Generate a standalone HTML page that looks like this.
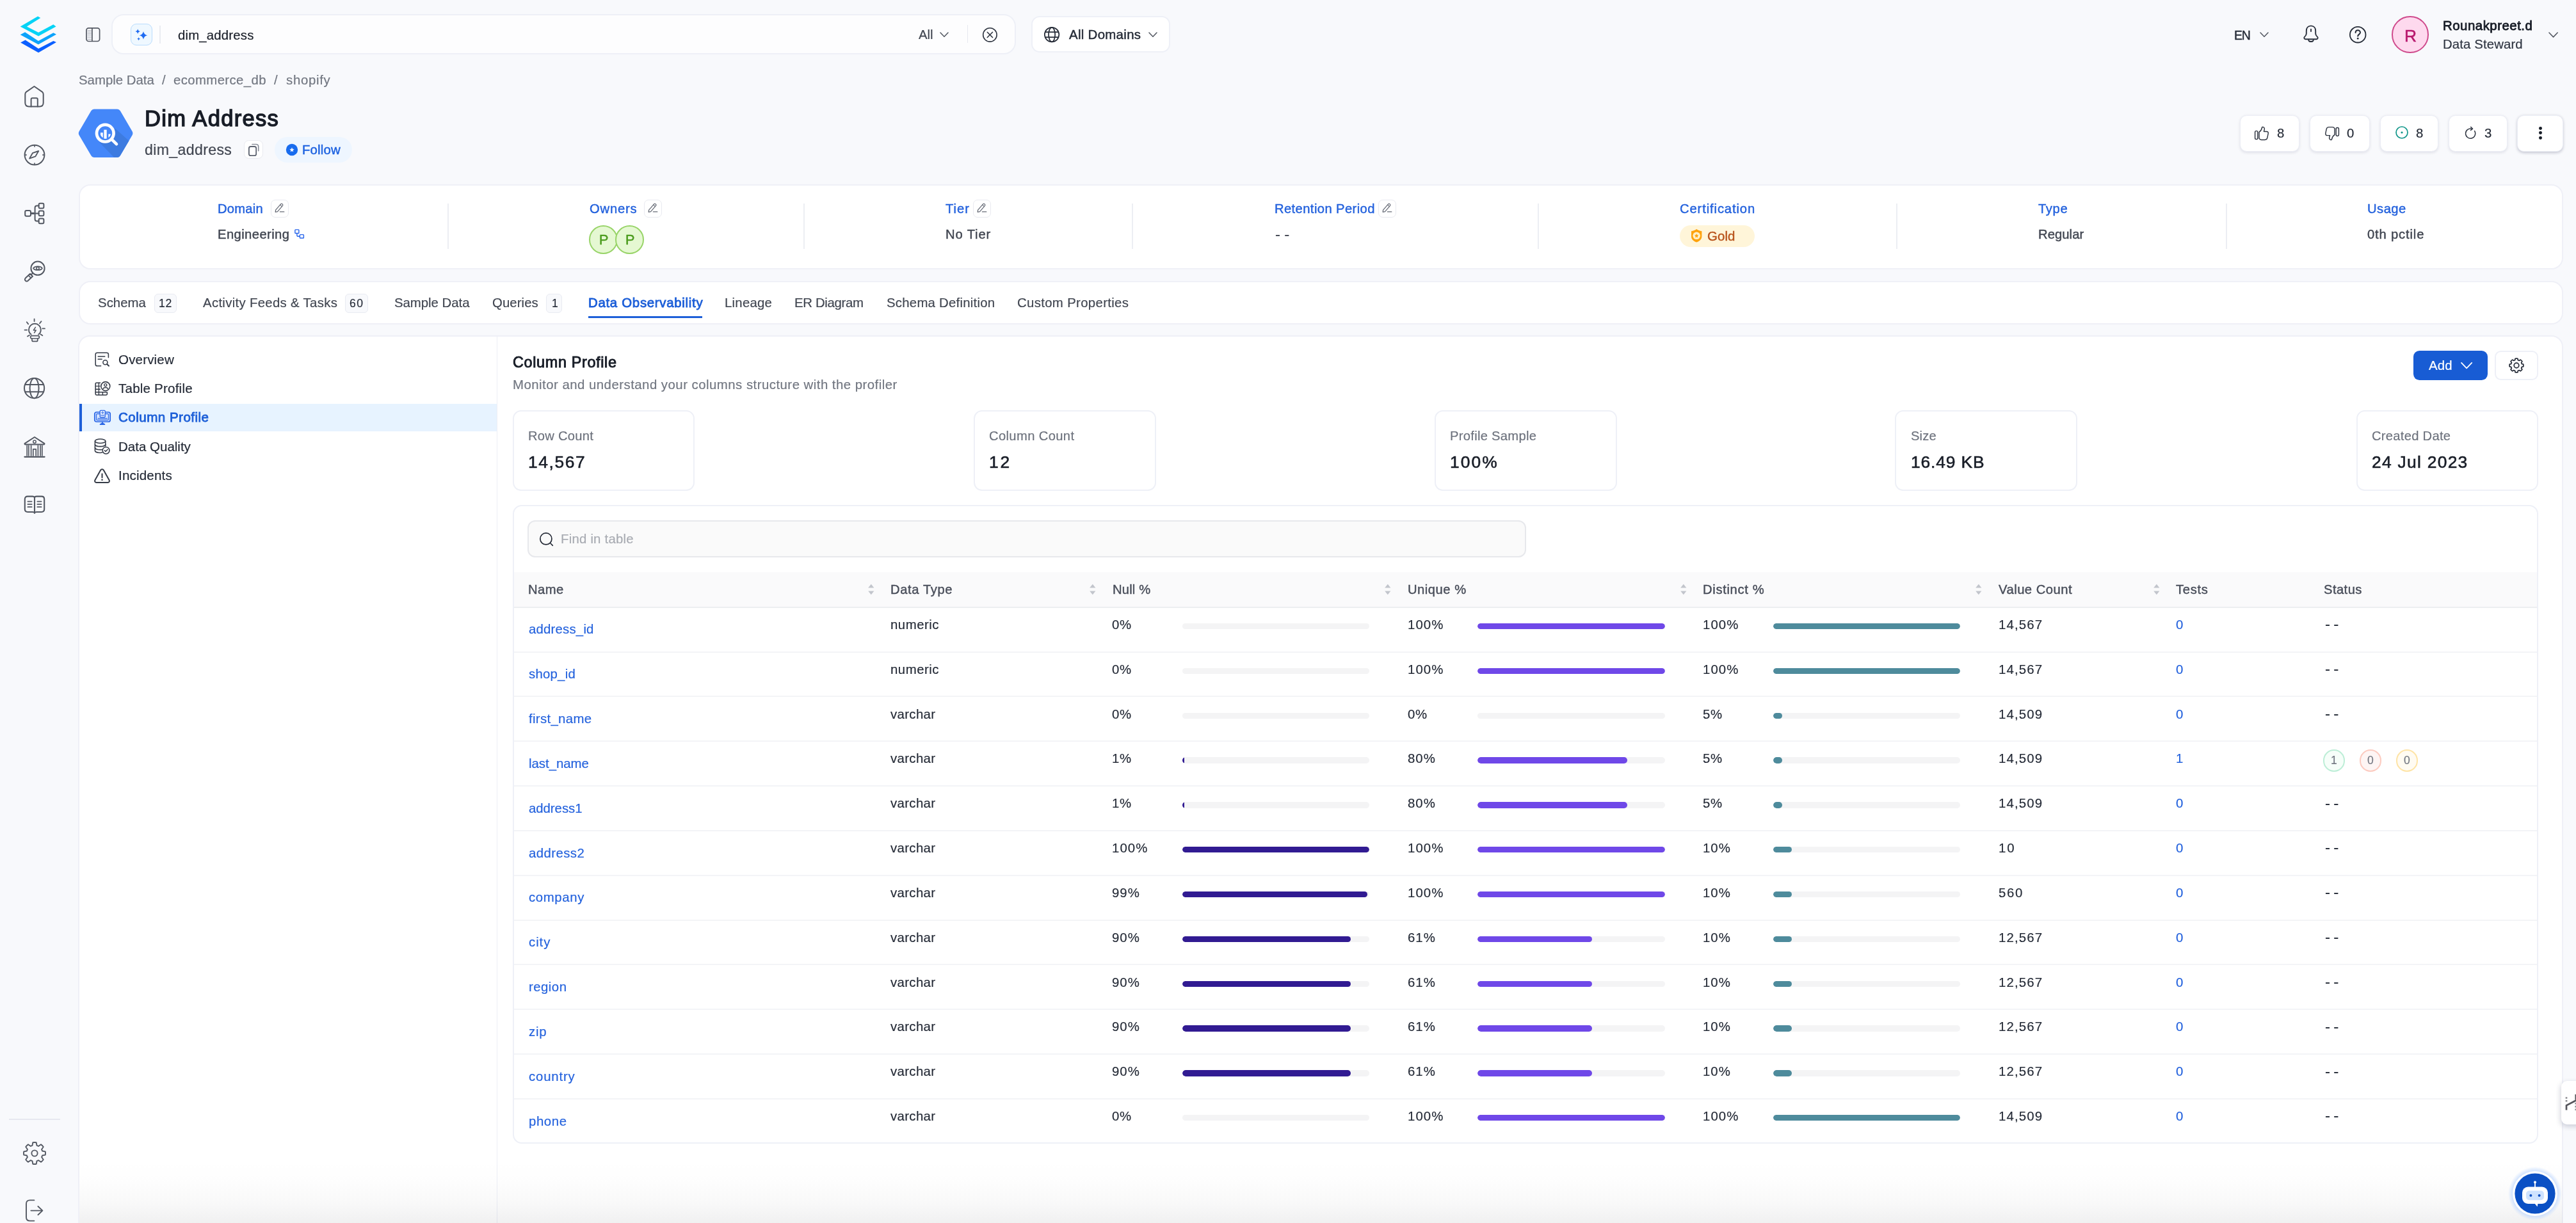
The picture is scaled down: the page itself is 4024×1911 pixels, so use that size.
<!DOCTYPE html>
<html lang="en"><head><meta charset="utf-8"><title>dim_address - Column Profile</title>
<style>
html,body{margin:0;padding:0;width:4024px;height:1911px;overflow:hidden}
body{width:4024px;height:1911px;overflow:hidden;background:#f8f9fc;position:relative;font-family:"Liberation Sans",sans-serif;}
div,span.t,svg.i{position:absolute;box-sizing:border-box}
.t{white-space:nowrap;will-change:transform}
.card{background:#fff;border:2px solid #eff0f7}
</style></head><body>
<div id="root" style="left:0;top:0;width:4024px;height:1911px;overflow:hidden">
<svg class="i" style="left:31px;top:25px;" width="58" height="59" viewBox="0 0 58 59"><polygon points="0.65,16.55 28.1,0.44 32.3,3.04 10.9,16.55 29.06,25.87 52.36,13.29 56.55,16.55 29.06,31.46" fill="#06d3f6"/><polygon points="0.65,29.3 8.1,25.2 28.9,38.9 52.4,26.15 57,28.7 28.9,44.5" fill="#0ca3fb"/><polygon points="1.1,41.4 8.6,37.5 29.06,51 52.4,38.9 57,41.06 29.06,57.3" fill="#0b5fff"/></svg>
<svg class="i" style="left:36.4px;top:132px;" width="35" height="38" viewBox="0 0 35 38"><g fill="none" stroke="#535862" stroke-width="2" stroke-linecap="round" stroke-linejoin="round"><path d="M17.5 3L5 11.6C3.8 12.5 3.3 13.6 3.3 15.2V28.6C3.3 32 5.4 34.4 9 34.4H26C29.6 34.4 31.7 32 31.7 28.6V15.2C31.7 13.6 31.2 12.5 30 11.6Z"/><path d="M12.6 34.4V23.2C12.6 22 13.4 21.2 14.6 21.2H20.8C22 21.2 22.8 22 22.8 23.2V34.4"/></g></svg>
<svg class="i" style="left:36px;top:224px;" width="36" height="36" viewBox="0 0 36 36"><g fill="none" stroke="#535862" stroke-width="2" stroke-linecap="round" stroke-linejoin="round"><circle cx="18" cy="18.1" r="15.4"/><path d="M10.1 23.6L14.9 15.2L24.2 12L19.4 20.4Z" stroke-width="1.9"/><path d="M18 3.4V5.2M18 31V32.8M3.4 18.1H5.2M30.8 18.1H32.6" stroke-width="1.6"/></g></svg>
<svg class="i" style="left:36px;top:315px;" width="36" height="37" viewBox="0 0 36 37"><g fill="none" stroke="#535862" stroke-width="2" stroke-linecap="round" stroke-linejoin="round"><rect x="3.2" y="14" width="8.8" height="8.8" rx="2.2"/><rect x="24.6" y="2.8" width="7.8" height="7.6" rx="2"/><rect x="24.6" y="14.6" width="7.8" height="7.6" rx="2"/><rect x="24.6" y="26.6" width="7.8" height="7.6" rx="2"/><path d="M12 18.4H24.6M24.6 6.6H21.6C19.6 6.6 18.6 7.6 18.6 9.6V27.4C18.6 29.4 19.6 30.4 21.6 30.4H24.6"/><path d="M12 16.9H17.5V19.9H12Z" fill="#535862" stroke="none"/></g></svg>
<svg class="i" style="left:36px;top:405px;" width="37" height="38" viewBox="0 0 37 38"><g fill="none" stroke="#535862" stroke-width="2" stroke-linecap="round" stroke-linejoin="round"><circle cx="23" cy="14.2" r="10.6"/><path d="M16 14.2C18.4 10.4 27.6 10.4 30 14.2C27.6 18 18.4 18 16 14.2Z" stroke-width="1.6"/><circle cx="23" cy="14.2" r="2.1" stroke-width="1.6"/><path d="M15.2 21.6L12.6 24.2"/><path d="M11 22.8L15 26.8L7.8 33.6C6.6 34.8 4.8 34.8 3.8 33.6C2.6 32.6 2.6 30.8 3.8 29.6Z"/><path d="M8.4 25.4L12.4 29.4" stroke-width="1.6"/></g></svg>
<svg class="i" style="left:36px;top:496px;" width="37" height="42" viewBox="0 0 37 42"><g fill="none" stroke="#535862" stroke-width="2" stroke-linecap="round" stroke-linejoin="round"><path d="M12.6 26.6C10.4 24.9 9 22.2 9 19.2C9 14 13.2 9.8 18.4 9.8C23.6 9.8 27.8 14 27.8 19.2C27.8 22.2 26.4 24.9 24.2 26.6" stroke-width="1.9"/><rect x="11.6" y="28.6" width="13.8" height="4.4" rx="2.2" stroke-width="1.7"/><path d="M14 33.2V35.4C14 36.6 14.8 37.4 16 37.4H20.8C22 37.4 22.8 36.6 22.8 35.4V33.2" stroke-width="1.7"/><path d="M19.4 15.4L16.4 20H20.2L17.6 24" stroke-width="1.5"/><path d="M17.6 2.4V6M5.8 7.3L8.2 10.4M28.5 6.1L26 9.2M2.5 19.6H6.2M30.3 17.4H34M7 29.6L10 27.7M27.3 26.3L30.3 28.2" stroke-width="1.8"/></g></svg>
<svg class="i" style="left:35.46px;top:588.4px;" width="37.2" height="37.2" viewBox="0 0 37.2 37.2"><g fill="none" stroke="#535862" stroke-width="2.0"><circle cx="18.6" cy="18.6" r="15.6"/><ellipse cx="18.6" cy="18.6" rx="7.02" ry="15.6"/><path d="M4.09 12.98H33.11M4.09 24.22H33.11"/></g></svg>
<svg class="i" style="left:35px;top:680px;" width="38" height="38" viewBox="0 0 38 38"><g fill="none" stroke="#535862" stroke-width="2" stroke-linecap="round" stroke-linejoin="round"><path d="M19 3L3.8 12.8C3.2 13.2 3.5 14.4 4.2 14.4H33.8C34.5 14.4 34.8 13.2 34.2 12.8Z"/><circle cx="19" cy="10.2" r="2.2" stroke-width="1.5"/><path d="M7.2 16V32M13.6 16V32M24.4 16V32M30.8 16V32M9.8 16V32M28.2 16V32" stroke-width="1.7"/><path d="M16.8 32V21.8H21.2V32" stroke-width="1.7"/><path d="M3.4 33.8H34.6" stroke-width="2.2"/></g></svg>
<svg class="i" style="left:35px;top:772px;" width="38" height="32" viewBox="0 0 38 32"><g fill="none" stroke="#535862" stroke-width="2" stroke-linecap="round" stroke-linejoin="round"><path d="M19 6C19 4.4 17.4 3.6 15.6 3.6H8.2C5.4 3.6 3.8 5.2 3.8 8V23.6C3.8 26.4 5.4 28 8.2 28H15.6C17.4 28 19 28.6 19 29.8C19 28.6 20.6 28 22.4 28H29.8C32.6 28 34.2 26.4 34.2 23.6V8C34.2 5.2 32.6 3.6 29.8 3.6H22.4C20.6 3.6 19 4.4 19 6Z" stroke-width="2.1"/><path d="M19 6V29.6" stroke-width="2.1"/><path d="M8.4 11.6H14.6M8.4 15.9H14.6M8.4 20.2H14.6M23.4 11.6H29.6M23.4 15.9H29.6M23.4 20.2H29.6" stroke-width="1.8"/></g></svg>
<div style="left:14px;top:1748px;width:80px;height:2px;background:#e6e8f0"></div>
<svg class="i" style="left:34px;top:1781.7px;" width="40" height="40" viewBox="0 0 40 40"><g fill="none" stroke="#535862" stroke-width="1.9" stroke-linecap="round" stroke-linejoin="round"><path d="M17.34 3.21A17.0 17.0 0 0 1 22.66 3.21L23.52 7.9A12.6 12.6 0 0 1 26.07 8.96L29.99 6.25A17.0 17.0 0 0 1 33.75 10.01L31.04 13.93A12.6 12.6 0 0 1 32.1 16.48L36.79 17.34A17.0 17.0 0 0 1 36.79 22.66L32.1 23.52A12.6 12.6 0 0 1 31.04 26.07L33.75 29.99A17.0 17.0 0 0 1 29.99 33.75L26.07 31.04A12.6 12.6 0 0 1 23.52 32.1L22.66 36.79A17.0 17.0 0 0 1 17.34 36.79L16.48 32.1A12.6 12.6 0 0 1 13.93 31.04L10.01 33.75A17.0 17.0 0 0 1 6.25 29.99L8.96 26.07A12.6 12.6 0 0 1 7.9 23.52L3.21 22.66A17.0 17.0 0 0 1 3.21 17.34L7.9 16.48A12.6 12.6 0 0 1 8.96 13.93L6.25 10.01A17.0 17.0 0 0 1 10.01 6.25L13.93 8.96A12.6 12.6 0 0 1 16.48 7.9L17.34 3.21Z" stroke-linejoin="round"/><circle cx="20" cy="20" r="4.6"/></g></svg>
<svg class="i" style="left:36px;top:1870px;" width="36" height="41" viewBox="0 0 36 41"><g fill="none" stroke="#535862" stroke-width="2" stroke-linecap="round" stroke-linejoin="round"><path d="M17.4 5.4H10.6C7 5.4 5 7.6 5 11V32C5 35.4 7 37.6 10.6 37.6H17.4" stroke-width="1.9"/><path d="M12.4 21.6H30M23.4 15L30.4 21.6L23.4 28.2" stroke-width="1.9"/></g></svg>
<svg class="i" style="left:132px;top:41px;" width="27" height="27" viewBox="0 0 27 27"><g fill="none" stroke="#535862" stroke-width="1.7"><rect x="3" y="2.9" width="20.6" height="20.6" rx="3.4"/><path d="M11.9 2.9V23.5"/></g><g stroke="#a3a8b2" stroke-width="1.1"><path d="M4.6 7.4H10.8M4.6 10.6H10.8M4.6 13.8H10.8M4.6 17H10.8M4.6 20.2H10.8"/></g></svg>
<div style="left:173.8px;top:22.2px;width:1413.4px;height:63px;background:#fdfdfe;border:2px solid #eef0f7;border-radius:19px"></div>
<div style="left:204px;top:37.4px;width:33.6px;height:33.6px;background:#eff8ff;border:1.5px solid #b9dcfd;border-radius:9px"></div>
<svg class="i" style="left:204px;top:37.4px;" width="33.6" height="33.6" viewBox="0 0 33.6 33.6"><path fill="#1e6bf2" d="M20 12Q21.04 17.16 26.2 18.2Q21.04 19.24 20 24.4Q18.96 19.24 13.8 18.2Q18.96 17.16 20 12ZM11.2 8.4Q11.82 11.48 14.9 12.1Q11.82 12.72 11.2 15.8Q10.58 12.72 7.5 12.1Q10.58 11.48 11.2 8.4ZM12.6 21.2Q13.02 23.28 15.1 23.7Q13.02 24.12 12.6 26.2Q12.18 24.12 10.1 23.7Q12.18 23.28 12.6 21.2Z"/></svg>
<div style="left:249px;top:40px;width:1.6px;height:27.5px;background:#eaecf2"></div>
<span class="t" style="left:278px;top:43px;line-height:24px;font-size:20.4px;color:#181d27;-webkit-text-stroke:0.18px #181d27;letter-spacing:0.16px;">dim_address</span>
<span class="t" style="left:1435px;top:42px;line-height:24px;font-size:20.4px;color:#414651;-webkit-text-stroke:0.18px #414651;letter-spacing:-0.03px;">All</span>
<svg class="i" style="left:1467.4px;top:49.48px;" width="16" height="10.24" viewBox="0 0 16 10.24"><path d="M2 2L8 8.24L14 2" fill="none" stroke="#535862" stroke-width="1.55" stroke-linecap="round" stroke-linejoin="round"/></svg>
<div style="left:1510.8px;top:39.2px;width:1.6px;height:27.5px;background:#e6e8ef"></div>
<svg class="i" style="left:1532.6px;top:40.9px;" width="26.8" height="26.8" viewBox="0 0 26.8 26.8"><g fill="none" stroke="#2f3541" stroke-width="1.6" stroke-linecap="round"><circle cx="13.4" cy="13.4" r="10.7"/><path d="M9.3 9.3L17.5 17.5M17.5 9.3L9.3 17.5"/></g></svg>
<div style="left:1610.6px;top:25.2px;width:217.6px;height:57.2px;background:#fff;border:2px solid #eef0f7;border-radius:13px"></div>
<svg class="i" style="left:1628.9px;top:40.2px;" width="28.2" height="28.2" viewBox="0 0 28.2 28.2"><g fill="none" stroke="#252b37" stroke-width="1.7"><circle cx="14.1" cy="14.1" r="11.25"/><ellipse cx="14.1" cy="14.1" rx="5.06" ry="11.25"/><path d="M3.64 10.05H24.56M3.64 18.15H24.56"/></g></svg>
<span class="t" style="left:1669.5px;top:42px;line-height:24px;font-size:20.4px;color:#252b37;-webkit-text-stroke:0.45px #252b37;letter-spacing:0.32px;">All Domains</span>
<svg class="i" style="left:1793.4px;top:49.48px;" width="16" height="10.24" viewBox="0 0 16 10.24"><path d="M2 2L8 8.24L14 2" fill="none" stroke="#535862" stroke-width="1.55" stroke-linecap="round" stroke-linejoin="round"/></svg>
<span class="t" style="left:3490px;top:43px;line-height:24px;font-size:19.4px;color:#252b37;-webkit-text-stroke:0.43px #252b37;letter-spacing:-1.15px;">EN</span>
<svg class="i" style="left:3529.4px;top:49.48px;" width="16" height="10.24" viewBox="0 0 16 10.24"><path d="M2 2L8 8.24L14 2" fill="none" stroke="#535862" stroke-width="1.55" stroke-linecap="round" stroke-linejoin="round"/></svg>
<svg class="i" style="left:3595.8px;top:38.4px;" width="28" height="30" viewBox="0 0 28 30"><g fill="none" stroke="#2a303c" stroke-width="1.9" stroke-linecap="round" stroke-linejoin="round"><path d="M14 2.4C9.4 2.4 6.8 5.8 6.8 10.2V14.6C6.8 16.6 5.8 18 4.2 19.4C2.6 20.8 3.2 23.2 5.4 23.2H22.6C24.8 23.2 25.4 20.8 23.8 19.4C22.2 18 21.2 16.6 21.2 14.6V10.2C21.2 5.8 18.6 2.4 14 2.4Z"/><path d="M14 7.6V11"/><path d="M10.2 24.8C11.4 27.8 16.6 27.8 17.8 24.8"/></g></svg>
<svg class="i" style="left:3668.2px;top:38.6px;" width="30.4" height="30.4" viewBox="0 0 30.4 30.4"><circle cx="15.2" cy="15.2" r="12.3" fill="none" stroke="#252b37" stroke-width="1.8"/><path d="M11.6 12C11.6 7.2 19 7.2 19 11.8C19 14.6 15.2 14.6 15.2 17.6" fill="none" stroke="#252b37" stroke-width="2" stroke-linecap="round"/><circle cx="15.2" cy="21.2" r="1.4" fill="#252b37"/></svg>
<div style="left:3736px;top:25.2px;width:57.6px;height:57.6px;background:#fed9ee;border:2px solid #cf4a8c;border-radius:50%"></div>
<span class="t" style="left:3756.2px;top:40px;line-height:32px;font-size:26.4px;color:#b8186d;-webkit-text-stroke:0.58px #b8186d;">R</span>
<span class="t" style="left:3816px;top:28px;line-height:24px;font-size:20.4px;color:#181d27;-webkit-text-stroke:0.82px #181d27;letter-spacing:0.51px;">Rounakpreet.d</span>
<span class="t" style="left:3816px;top:57px;line-height:24px;font-size:20.4px;color:#2f3541;-webkit-text-stroke:0.18px #2f3541;letter-spacing:0.1px;">Data Steward</span>
<svg class="i" style="left:3979.8px;top:49.17px;" width="17.2" height="10.86" viewBox="0 0 17.2 10.86"><path d="M2 2L8.6 8.86L15.2 2" fill="none" stroke="#535862" stroke-width="1.55" stroke-linecap="round" stroke-linejoin="round"/></svg>
<span class="t" style="left:122.7px;top:113px;line-height:24px;font-size:20.4px;color:#717680;-webkit-text-stroke:0.18px #717680;">Sample Data</span>
<span class="t" style="left:253px;top:113px;line-height:24px;font-size:20.4px;color:#717680;-webkit-text-stroke:0.18px #717680;">/</span>
<span class="t" style="left:271.4px;top:113px;line-height:24px;font-size:20.4px;color:#717680;-webkit-text-stroke:0.18px #717680;letter-spacing:0.36px;">ecommerce_db</span>
<span class="t" style="left:428px;top:113px;line-height:24px;font-size:20.4px;color:#717680;-webkit-text-stroke:0.18px #717680;">/</span>
<span class="t" style="left:446.8px;top:113px;line-height:24px;font-size:20.4px;color:#717680;-webkit-text-stroke:0.18px #717680;letter-spacing:0.68px;">shopify</span>
<svg class="i" style="left:122px;top:169.6px;" width="86.2" height="76.2" viewBox="0 0 86.2 76.2"><defs><clipPath id="hx"><path d="M25.4 0.4H60.8C63 0.4 64.8 1.4 65.9 3.3L84.6 35.2C85.7 37.1 85.7 39.3 84.6 41.2L65.9 73.1C64.8 75 63 76 60.8 76H25.4C23.2 76 21.4 75 20.3 73.1L1.6 41.2C0.5 39.3 0.5 37.1 1.6 35.2L20.3 3.3C21.4 1.4 23.2 0.4 25.4 0.4Z"/></clipPath></defs><g clip-path="url(#hx)"><rect width="87" height="77" fill="#4487f9"/><path d="M57.5 30.5L80 50.5L68 80H60L33.5 52.5Z" fill="#3d7be0"/></g><circle cx="42.3" cy="38.2" r="13.3" fill="#4487f9" stroke="#fff" stroke-width="4.7"/><path d="M53.6 48.8L60 55.2" stroke="#fff" stroke-width="4.7" stroke-linecap="round"/><path d="M35 37.2H38.8V45.2C37 44.2 35.8 42.6 35 40.6ZM40.4 32.7H44.7V46.4C43.3 46.8 41.8 46.8 40.4 46.4ZM47.4 39.6H50.9C50.4 42.2 49.2 43.8 47.4 45Z" fill="#fff"/></svg>
<span class="t" style="left:226px;top:165px;line-height:40px;font-size:34.6px;color:#181d27;-webkit-text-stroke:1.38px #181d27;letter-spacing:1.29px;">Dim Address</span>
<span class="t" style="left:226px;top:220px;line-height:28px;font-size:23.2px;color:#414651;-webkit-text-stroke:0.21px #414651;letter-spacing:0.32px;">dim_address</span>
<div style="left:381px;top:218.6px;width:29.6px;height:29.6px;background:#fff;border:1.5px solid #e9eaf0;border-radius:7.5px"></div>
<svg class="i" style="left:381px;top:218.6px;" width="29.6" height="29.6" viewBox="0 0 29.6 29.6"><g fill="none" stroke-linejoin="round" stroke-linecap="round"><path d="M13 6.5H19C21.4 6.5 22.7 7.8 22.7 10.2V16.6" stroke="#8a8f9a" stroke-width="1.7"/><rect x="7.9" y="10" width="11.3" height="14.2" rx="2.8" stroke="#5d6370" stroke-width="1.8"/></g></svg>
<div style="left:429px;top:214px;width:121px;height:39.8px;background:#eef6ff;border-radius:20px"></div>
<svg class="i" style="left:445.3px;top:222.8px;" width="22" height="22" viewBox="0 0 22 22"><circle cx="11" cy="11" r="9.2" fill="#186cee"/><polygon points="11,7.3 12.03,9.78 14.71,9.99 12.66,11.74 13.29,14.36 11,12.95 8.71,14.36 9.34,11.74 7.29,9.99 9.97,9.78" fill="#f3f7ff"/></svg>
<span class="t" style="left:472.2px;top:222px;line-height:24px;font-size:20.4px;color:#1d62e0;-webkit-text-stroke:0.45px #1d62e0;letter-spacing:0.16px;">Follow</span>
<div style="left:3498.7px;top:179.8px;width:93.4px;height:56.8px;background:#fff;border:1.5px solid #ebedf5;border-radius:10.5px;box-shadow:0 1.5px 4px rgba(16,24,64,0.10)"></div>
<div style="left:3608.1px;top:179.8px;width:93.7px;height:56.8px;background:#fff;border:1.5px solid #ebedf5;border-radius:10.5px;box-shadow:0 1.5px 4px rgba(16,24,64,0.10)"></div>
<div style="left:3717.7px;top:179.8px;width:91px;height:56.8px;background:#fff;border:1.5px solid #ebedf5;border-radius:10.5px;box-shadow:0 1.5px 4px rgba(16,24,64,0.10)"></div>
<div style="left:3825px;top:179.8px;width:91.8px;height:56.8px;background:#fff;border:1.5px solid #ebedf5;border-radius:10.5px;box-shadow:0 1.5px 4px rgba(16,24,64,0.10)"></div>
<div style="left:3932.1px;top:179.8px;width:71.7px;height:56.8px;background:#fff;border:1.5px solid #ebedf5;border-radius:10.5px;box-shadow:0 1.5px 4px rgba(16,24,64,0.22)"></div>
<svg class="i" style="left:3521.4px;top:197.2px;" width="24" height="23" viewBox="0 0 24 23"><g fill="none" stroke="#2f3541" stroke-width="1.45" stroke-linejoin="round" stroke-linecap="round"><rect x="1.6" y="7.6" width="4.2" height="13" rx="1.8"/><path d="M8 19.4V9.4C10.6 7.8 12 5 12.4 2.6C12.6 1.4 13.6 1.2 14.6 1.6C16.4 2.4 16.6 4.6 16 6.4L15.4 8.4H19.6C21.4 8.4 22.6 9.8 22.2 11.6L20.8 18.4C20.4 20.4 19 21.4 17 21.4H11.4C10 21.4 9 20.8 8 19.4Z"/></g></svg>
<span class="t" style="left:3556.7px;top:196px;line-height:24px;font-size:20.4px;color:#252b37;-webkit-text-stroke:0.18px #252b37;">8</span>
<svg class="i" style="left:3631.4px;top:197.2px;" width="24" height="23" viewBox="0 0 24 23"><g fill="none" stroke="#2f3541" stroke-width="1.45" stroke-linejoin="round" stroke-linecap="round" transform="rotate(180 12 11.5) translate(0 0)"><rect x="1.6" y="7.6" width="4.2" height="13" rx="1.8"/><path d="M8 19.4V9.4C10.6 7.8 12 5 12.4 2.6C12.6 1.4 13.6 1.2 14.6 1.6C16.4 2.4 16.6 4.6 16 6.4L15.4 8.4H19.6C21.4 8.4 22.6 9.8 22.2 11.6L20.8 18.4C20.4 20.4 19 21.4 17 21.4H11.4C10 21.4 9 20.8 8 19.4Z"/></g></svg>
<span class="t" style="left:3665.8px;top:196px;line-height:24px;font-size:20.4px;color:#252b37;-webkit-text-stroke:0.18px #252b37;">0</span>
<svg class="i" style="left:3740px;top:194.6px;" width="24" height="24" viewBox="0 0 24 24"><circle cx="12" cy="12" r="9" fill="none" stroke="#12978a" stroke-width="1.7"/><circle cx="12" cy="12" r="1.6" fill="#12978a"/></svg>
<span class="t" style="left:3774.2px;top:196px;line-height:24px;font-size:20.4px;color:#252b37;-webkit-text-stroke:0.18px #252b37;">8</span>
<svg class="i" style="left:3846.7px;top:194.6px;" width="24" height="25" viewBox="0 0 24 25"><g fill="none" stroke="#2f3541" stroke-width="1.45" stroke-linecap="round" stroke-linejoin="round"><path d="M14.6 6.4A7.6 7.6 0 1 0 18.6 9.6"/><path d="M12.6 3.4L15.6 6.2L12.4 8.6"/></g></svg>
<span class="t" style="left:3881.3px;top:196px;line-height:24px;font-size:20.4px;color:#252b37;-webkit-text-stroke:0.18px #252b37;">3</span>
<div style="left:3965.9px;top:198.1px;width:4.8px;height:4.8px;background:#181d27;border-radius:50%"></div>
<div style="left:3965.9px;top:205.4px;width:4.8px;height:4.8px;background:#181d27;border-radius:50%"></div>
<div style="left:3965.9px;top:213px;width:4.8px;height:4.8px;background:#181d27;border-radius:50%"></div>
<div class="card" style="left:122.6px;top:287.8px;width:3881px;height:133.6px;border-radius:18px"></div>
<div style="left:699px;top:318px;width:2px;height:71px;background:#eceef3"></div>
<div style="left:1255px;top:318px;width:2px;height:71px;background:#eceef3"></div>
<div style="left:1768px;top:318px;width:2px;height:71px;background:#eceef3"></div>
<div style="left:2402px;top:318px;width:2px;height:71px;background:#eceef3"></div>
<div style="left:2962px;top:318px;width:2px;height:71px;background:#eceef3"></div>
<div style="left:3477px;top:318px;width:2px;height:71px;background:#eceef3"></div>
<span class="t" style="left:339.8px;top:314px;line-height:24px;font-size:20.2px;color:#2462dd;-webkit-text-stroke:0.44px #2462dd;letter-spacing:0.24px;">Domain</span>
<div style="left:423.2px;top:312.3px;width:27.8px;height:27.8px;background:#fff;border:1.5px solid #e9eaf0;border-radius:7px"></div>
<svg class="i" style="left:423.2px;top:312.3px;" width="27.8" height="27.8" viewBox="0 0 27.8 27.8"><g fill="none" stroke="#666b76" stroke-width="1.25" stroke-linecap="round" stroke-linejoin="round"><path d="M15.4 7.2C16.2 6.2 17.4 6.2 18.2 6.9C19 7.6 19 8.8 18.3 9.6L10.6 18.6L7.2 19.4L7.6 16.2Z"/><path d="M14.6 8.2L17.4 10.6" stroke-width="1.1"/><path d="M14.4 18.9H20.8"/></g></svg>
<span class="t" style="left:339.8px;top:354px;line-height:24px;font-size:20.2px;color:#414651;-webkit-text-stroke:0.44px #414651;letter-spacing:0.42px;">Engineering</span>
<svg class="i" style="left:460.4px;top:358px;" width="16" height="16" viewBox="0 0 16 16"><g fill="none" stroke="#2563eb" stroke-width="1.4" stroke-linejoin="round"><rect x="0.9" y="0.9" width="6" height="5.6" rx="0.8"/><rect x="8.4" y="8.6" width="6" height="5.4" rx="0.8"/><path d="M3.9 6.5V9.4C3.9 10.6 4.6 11.3 5.8 11.3H8.4"/></g></svg>
<span class="t" style="left:921px;top:314px;line-height:24px;font-size:20.2px;color:#2462dd;-webkit-text-stroke:0.44px #2462dd;letter-spacing:0.82px;">Owners</span>
<div style="left:1006.4px;top:312.3px;width:27.8px;height:27.8px;background:#fff;border:1.5px solid #e9eaf0;border-radius:7px"></div>
<svg class="i" style="left:1006.4px;top:312.3px;" width="27.8" height="27.8" viewBox="0 0 27.8 27.8"><g fill="none" stroke="#666b76" stroke-width="1.25" stroke-linecap="round" stroke-linejoin="round"><path d="M15.4 7.2C16.2 6.2 17.4 6.2 18.2 6.9C19 7.6 19 8.8 18.3 9.6L10.6 18.6L7.2 19.4L7.6 16.2Z"/><path d="M14.6 8.2L17.4 10.6" stroke-width="1.1"/><path d="M14.4 18.9H20.8"/></g></svg>
<div style="left:920.4px;top:352.1px;width:44.8px;height:44.8px;background:#e5f8d2;border:2px solid #98d468;border-radius:50%"></div>
<span class="t" style="left:936.4px;top:361px;line-height:27px;font-size:21.6px;color:#4a9b1c;-webkit-text-stroke:0.48px #4a9b1c;">P</span>
<div style="left:960.9px;top:352.1px;width:44.8px;height:44.8px;background:#e5f8d2;border:2px solid #98d468;border-radius:50%"></div>
<span class="t" style="left:976.9px;top:361px;line-height:27px;font-size:21.6px;color:#4a9b1c;-webkit-text-stroke:0.48px #4a9b1c;">P</span>
<span class="t" style="left:1476.7px;top:314px;line-height:24px;font-size:20.2px;color:#2462dd;-webkit-text-stroke:0.44px #2462dd;letter-spacing:0.95px;">Tier</span>
<div style="left:1520px;top:312.3px;width:27.8px;height:27.8px;background:#fff;border:1.5px solid #e9eaf0;border-radius:7px"></div>
<svg class="i" style="left:1520px;top:312.3px;" width="27.8" height="27.8" viewBox="0 0 27.8 27.8"><g fill="none" stroke="#666b76" stroke-width="1.25" stroke-linecap="round" stroke-linejoin="round"><path d="M15.4 7.2C16.2 6.2 17.4 6.2 18.2 6.9C19 7.6 19 8.8 18.3 9.6L10.6 18.6L7.2 19.4L7.6 16.2Z"/><path d="M14.6 8.2L17.4 10.6" stroke-width="1.1"/><path d="M14.4 18.9H20.8"/></g></svg>
<span class="t" style="left:1476.7px;top:354px;line-height:24px;font-size:20.2px;color:#414651;-webkit-text-stroke:0.44px #414651;letter-spacing:0.87px;">No Tier</span>
<span class="t" style="left:1990.5px;top:314px;line-height:24px;font-size:20.2px;color:#2462dd;-webkit-text-stroke:0.44px #2462dd;letter-spacing:0.4px;">Retention Period</span>
<div style="left:2153.4px;top:312.3px;width:27.8px;height:27.8px;background:#fff;border:1.5px solid #e9eaf0;border-radius:7px"></div>
<svg class="i" style="left:2153.4px;top:312.3px;" width="27.8" height="27.8" viewBox="0 0 27.8 27.8"><g fill="none" stroke="#666b76" stroke-width="1.25" stroke-linecap="round" stroke-linejoin="round"><path d="M15.4 7.2C16.2 6.2 17.4 6.2 18.2 6.9C19 7.6 19 8.8 18.3 9.6L10.6 18.6L7.2 19.4L7.6 16.2Z"/><path d="M14.6 8.2L17.4 10.6" stroke-width="1.1"/><path d="M14.4 18.9H20.8"/></g></svg>
<span class="t" style="left:1991.5px;top:351px;line-height:29px;font-size:24px;color:#414651;-webkit-text-stroke:0.22px #414651;letter-spacing:6.22px;">--</span>
<span class="t" style="left:2623.8px;top:314px;line-height:24px;font-size:20.2px;color:#2462dd;-webkit-text-stroke:0.44px #2462dd;letter-spacing:0.88px;">Certification</span>
<div style="left:2624px;top:351.7px;width:117px;height:34.5px;background:#fff5d9;border-radius:18px"></div>
<svg class="i" style="left:2640.6px;top:357.4px;" width="18.4" height="22.6" viewBox="0 0 18.4 22.6"><path d="M9.2 1C6.8 2.8 4 3.8 1.6 4C1.2 4 1 4.3 1 4.7V12.4C1 17 5 20 9.2 21.6C13.4 20 17.4 17 17.4 12.4V4.7C17.4 4.3 17.2 4 16.8 4C14.4 3.8 11.6 2.8 9.2 1Z" fill="#ffa30d"/><circle cx="9.2" cy="11.3" r="5.8" fill="#fff0c8"/><polygon points="9.2,8.2 10.2,10.12 12.34,10.48 10.82,12.03 11.14,14.17 9.2,13.2 7.26,14.17 7.58,12.03 6.06,10.48 8.2,10.12" fill="#ffa30d"/></svg>
<span class="t" style="left:2666.6px;top:357px;line-height:24px;font-size:20.4px;color:#b9541c;-webkit-text-stroke:0.45px #b9541c;letter-spacing:0.11px;">Gold</span>
<span class="t" style="left:3184.3px;top:314px;line-height:24px;font-size:20.2px;color:#2462dd;-webkit-text-stroke:0.44px #2462dd;letter-spacing:0.64px;">Type</span>
<span class="t" style="left:3184.3px;top:354px;line-height:24px;font-size:20.2px;color:#414651;-webkit-text-stroke:0.44px #414651;letter-spacing:0.09px;">Regular</span>
<span class="t" style="left:3698.4px;top:314px;line-height:24px;font-size:20.2px;color:#2462dd;-webkit-text-stroke:0.44px #2462dd;letter-spacing:0.48px;">Usage</span>
<span class="t" style="left:3698.4px;top:354px;line-height:24px;font-size:20.2px;color:#414651;-webkit-text-stroke:0.44px #414651;letter-spacing:0.84px;">0th pctile</span>
<div class="card" style="left:122.6px;top:439px;width:3881px;height:68px;border-radius:18px"></div>
<span class="t" style="left:152.6px;top:461px;line-height:24px;font-size:20.4px;color:#414651;-webkit-text-stroke:0.18px #414651;letter-spacing:0.03px;">Schema</span>
<div style="left:241.3px;top:459.3px;width:34.3px;height:30px;background:#f8f9fc;border:1.5px solid #e9ebf2;border-radius:6px"></div>
<span class="t" style="left:248px;top:463px;line-height:22px;font-size:17.6px;color:#252b37;-webkit-text-stroke:0.16px #252b37;letter-spacing:0.83px;">12</span>
<span class="t" style="left:316.6px;top:461px;line-height:24px;font-size:20.4px;color:#414651;-webkit-text-stroke:0.18px #414651;letter-spacing:0.3px;">Activity Feeds &amp; Tasks</span>
<div style="left:539px;top:459.3px;width:35.8px;height:30px;background:#f8f9fc;border:1.5px solid #e9ebf2;border-radius:6px"></div>
<span class="t" style="left:546.4px;top:463px;line-height:22px;font-size:17.6px;color:#252b37;-webkit-text-stroke:0.16px #252b37;letter-spacing:1.43px;">60</span>
<span class="t" style="left:615.6px;top:461px;line-height:24px;font-size:20.4px;color:#414651;-webkit-text-stroke:0.18px #414651;letter-spacing:-0.04px;">Sample Data</span>
<span class="t" style="left:769px;top:461px;line-height:24px;font-size:20.4px;color:#414651;-webkit-text-stroke:0.18px #414651;letter-spacing:0.06px;">Queries</span>
<div style="left:853px;top:459.3px;width:25px;height:30px;background:#f8f9fc;border:1.5px solid #e9ebf2;border-radius:6px"></div>
<span class="t" style="left:861.6px;top:463px;line-height:22px;font-size:17.6px;color:#252b37;-webkit-text-stroke:0.16px #252b37;">1</span>
<span class="t" style="left:918.6px;top:461px;line-height:24px;font-size:20.4px;color:#1d5fd8;-webkit-text-stroke:0.82px #1d5fd8;letter-spacing:0.71px;">Data Observability</span>
<div style="left:918.6px;top:494px;width:178.8px;height:3px;background:#1d5fd8"></div>
<span class="t" style="left:1132px;top:461px;line-height:24px;font-size:20.4px;color:#414651;-webkit-text-stroke:0.18px #414651;letter-spacing:0.23px;">Lineage</span>
<span class="t" style="left:1241px;top:461px;line-height:24px;font-size:20.4px;color:#414651;-webkit-text-stroke:0.18px #414651;letter-spacing:-0.34px;">ER Diagram</span>
<span class="t" style="left:1384.7px;top:461px;line-height:24px;font-size:20.4px;color:#414651;-webkit-text-stroke:0.18px #414651;letter-spacing:0.23px;">Schema Definition</span>
<span class="t" style="left:1589px;top:461px;line-height:24px;font-size:20.4px;color:#414651;-webkit-text-stroke:0.18px #414651;letter-spacing:0.32px;">Custom Properties</span>
<div class="card" style="left:122.2px;top:523.8px;width:3881.4px;height:1420px;border-radius:18px"></div>
<div style="left:775.6px;top:526px;width:1.6px;height:1390px;background:#eceef6"></div>
<div style="left:124.2px;top:631.2px;width:651.4px;height:42.6px;background:#e7f3ff"></div>
<div style="left:123.8px;top:631.2px;width:4.6px;height:42.6px;background:#1d5fd8"></div>
<svg class="i" style="left:146.6px;top:549px;" width="25" height="25" viewBox="0 0 25 25"><g fill="none" stroke="#353b47" stroke-width="1.55" stroke-linecap="round" stroke-linejoin="round"><path d="M22.4 9.6V4.8C22.4 3.2 21.4 2.2 19.8 2.2H4.8C3.2 2.2 2.2 3.2 2.2 4.8V20.2C2.2 21.8 3.2 22.8 4.8 22.8H10.6"/><path d="M6.2 8H16.8M6.2 12.2H12.2"/><circle cx="17.4" cy="17.2" r="3.5"/><path d="M20.2 20L23 22.8" stroke-width="2"/></g></svg>
<span class="t" style="left:184.5px;top:549px;line-height:25px;font-size:20.6px;color:#252b37;-webkit-text-stroke:0.19px #252b37;letter-spacing:0.14px;">Overview</span>
<svg class="i" style="left:146.6px;top:594px;" width="26" height="25" viewBox="0 0 26 25"><g fill="none" stroke="#353b47" stroke-width="1.55" stroke-linecap="round" stroke-linejoin="round"><path d="M9.6 4.2H3.4C2.6 4.2 2.2 4.6 2.2 5.4V21.2C2.2 22.4 3 23.2 4.2 23.2H18.4C19.6 23.2 20.4 22.4 20.4 21.2V19.6"/><path d="M2.2 9.4H9M2.2 14.2H9.4M2.2 18.8H20.2M7.4 4.2V23.2M13.4 18.8V23.2" stroke-width="1.4"/><circle cx="17.8" cy="9.6" r="7"/><circle cx="17.8" cy="7.6" r="2" stroke-width="1.3"/><path d="M14 13.6C14.6 10.8 21 10.8 21.6 13.6" stroke-width="1.3"/></g></svg>
<span class="t" style="left:184.5px;top:594px;line-height:25px;font-size:20.6px;color:#252b37;-webkit-text-stroke:0.19px #252b37;letter-spacing:0.19px;">Table Profile</span>
<svg class="i" style="left:145.6px;top:640.4px;" width="28" height="25" viewBox="0 0 28 25"><g fill="none" stroke="#2a66e6" stroke-width="1.7" stroke-linecap="round" stroke-linejoin="round"><rect x="1.8" y="4" width="24.4" height="15" rx="2.8" fill="#c4d9fd"/><rect x="4.6" y="6.6" width="18.8" height="9.8" rx="1.2" stroke-width="1.1" fill="#d6e5fe"/><rect x="10.2" y="1.4" width="8" height="10.6" rx="1" fill="#eef4ff" stroke-width="1.3"/><circle cx="14.2" cy="4.7" r="1.2" stroke-width="1.1"/><path d="M11.8 8.8H16.6" stroke-width="1.2"/><path d="M7 13.8H21.4" stroke-width="1.3"/><path d="M14 19V21M10.4 23.2L14 21L17.6 23.2Z" stroke-width="1.5" fill="#2a66e6"/></g></svg>
<span class="t" style="left:184.5px;top:639px;line-height:25px;font-size:20.6px;color:#1d5fd8;-webkit-text-stroke:0.82px #1d5fd8;letter-spacing:0.46px;">Column Profile</span>
<svg class="i" style="left:146px;top:684px;" width="27" height="27" viewBox="0 0 27 27"><g fill="none" stroke="#353b47" stroke-width="1.55" stroke-linecap="round" stroke-linejoin="round"><ellipse cx="10.6" cy="5.2" rx="8.2" ry="3.2"/><path d="M2.4 5.2V10.4C2.4 12.2 6 13.6 10.6 13.6C15.2 13.6 18.8 12.2 18.8 10.4V5.2"/><path d="M2.4 10.4V15.6C2.4 17.4 6 18.8 10.6 18.8C11.6 18.8 12.4 18.7 13.2 18.6"/><path d="M2.4 15.6V20.2C2.4 22 6 23.4 10.6 23.4C11.8 23.4 12.8 23.3 13.8 23.1"/><path d="M18.8 10.4V13"/><circle cx="19.6" cy="19.8" r="5.4" fill="#fff"/><path d="M17.2 19.8L19 21.6L22.2 18.2" stroke-width="1.4"/></g></svg>
<span class="t" style="left:184.5px;top:685px;line-height:25px;font-size:20.6px;color:#252b37;-webkit-text-stroke:0.19px #252b37;letter-spacing:-0.04px;">Data Quality</span>
<svg class="i" style="left:146px;top:731px;" width="27" height="25" viewBox="0 0 27 25"><g fill="none" stroke="#353b47" stroke-width="1.55" stroke-linecap="round" stroke-linejoin="round"><path d="M11.2 3.6C12.2 1.8 14.8 1.8 15.8 3.6L24.6 19.2C25.6 21 24.4 23 22.4 23H4.6C2.6 23 1.4 21 2.4 19.2Z" stroke-width="2"/><path d="M13.5 9.4V15.2" stroke-width="2"/><circle cx="13.5" cy="18.8" r="0.7" fill="#252b37" stroke-width="1.2"/></g></svg>
<span class="t" style="left:184.5px;top:730px;line-height:25px;font-size:20.6px;color:#252b37;-webkit-text-stroke:0.19px #252b37;letter-spacing:0.16px;">Incidents</span>
<span class="t" style="left:801px;top:552px;line-height:28px;font-size:23.4px;color:#181d27;-webkit-text-stroke:0.94px #181d27;letter-spacing:0.66px;">Column Profile</span>
<span class="t" style="left:801px;top:589px;line-height:24px;font-size:20.4px;color:#717680;-webkit-text-stroke:0.18px #717680;letter-spacing:0.47px;">Monitor and understand your columns structure with the profiler</span>
<div style="left:3770.4px;top:548.2px;width:115.6px;height:46px;background:#185cd4;border-radius:9.4px"></div>
<span class="t" style="left:3794.2px;top:559px;line-height:24px;font-size:20.4px;color:#fff;-webkit-text-stroke:0.18px #fff;letter-spacing:0.1px;">Add</span>
<svg class="i" style="left:3842.8px;top:565.19px;" width="20.2" height="12.42" viewBox="0 0 20.2 12.42"><path d="M2 2L10.1 10.42L18.2 2" fill="none" stroke="#fff" stroke-width="1.8" stroke-linecap="round" stroke-linejoin="round"/></svg>
<div style="left:3897px;top:548px;width:68.2px;height:46.4px;background:#fff;border:2px solid #eef0f7;border-radius:9.6px"></div>
<svg class="i" style="left:3917.3px;top:557.3px;" width="28" height="28" viewBox="0 0 28 28"><g fill="none" stroke="#252b37" stroke-width="1.7" stroke-linejoin="round"><path d="M12.13 3.26A10.9 10.9 0 0 1 15.87 3.26L16.3 5.61A8.7 8.7 0 0 1 18.31 6.44L20.27 5.08A10.9 10.9 0 0 1 22.92 7.73L21.56 9.69A8.7 8.7 0 0 1 22.39 11.7L24.74 12.13A10.9 10.9 0 0 1 24.74 15.87L22.39 16.3A8.7 8.7 0 0 1 21.56 18.31L22.92 20.27A10.9 10.9 0 0 1 20.27 22.92L18.31 21.56A8.7 8.7 0 0 1 16.3 22.39L15.87 24.74A10.9 10.9 0 0 1 12.13 24.74L11.7 22.39A8.7 8.7 0 0 1 9.69 21.56L7.73 22.92A10.9 10.9 0 0 1 5.08 20.27L6.44 18.31A8.7 8.7 0 0 1 5.61 16.3L3.26 15.87A10.9 10.9 0 0 1 3.26 12.13L5.61 11.7A8.7 8.7 0 0 1 6.44 9.69L5.08 7.73A10.9 10.9 0 0 1 7.73 5.08L9.69 6.44A8.7 8.7 0 0 1 11.7 5.61Z"/><circle cx="14" cy="14" r="3.8"/></g></svg>
<div style="left:800.6px;top:640.8px;width:284.8px;height:125.8px;background:#fff;border:2px solid #eef0f7;border-radius:13px"></div>
<span class="t" style="left:825px;top:669px;line-height:24px;font-size:20.2px;color:#6c717c;-webkit-text-stroke:0.18px #6c717c;letter-spacing:0.26px;">Row Count</span>
<span class="t" style="left:825px;top:706px;line-height:32px;font-size:26.4px;color:#181d27;-webkit-text-stroke:0.58px #181d27;letter-spacing:1.57px;">14,567</span>
<div style="left:1520.9px;top:640.8px;width:284.8px;height:125.8px;background:#fff;border:2px solid #eef0f7;border-radius:13px"></div>
<span class="t" style="left:1545.3px;top:669px;line-height:24px;font-size:20.2px;color:#6c717c;-webkit-text-stroke:0.18px #6c717c;letter-spacing:0.36px;">Column Count</span>
<span class="t" style="left:1545.3px;top:706px;line-height:32px;font-size:26.4px;color:#181d27;-webkit-text-stroke:0.58px #181d27;letter-spacing:2.74px;">12</span>
<div style="left:2240.9px;top:640.8px;width:284.8px;height:125.8px;background:#fff;border:2px solid #eef0f7;border-radius:13px"></div>
<span class="t" style="left:2265.3px;top:669px;line-height:24px;font-size:20.2px;color:#6c717c;-webkit-text-stroke:0.18px #6c717c;letter-spacing:0.28px;">Profile Sample</span>
<span class="t" style="left:2265.3px;top:706px;line-height:32px;font-size:26.4px;color:#181d27;-webkit-text-stroke:0.58px #181d27;letter-spacing:2.09px;">100%</span>
<div style="left:2960.3px;top:640.8px;width:284.8px;height:125.8px;background:#fff;border:2px solid #eef0f7;border-radius:13px"></div>
<span class="t" style="left:2984.7px;top:669px;line-height:24px;font-size:20.2px;color:#6c717c;-webkit-text-stroke:0.18px #6c717c;letter-spacing:0.14px;">Size</span>
<span class="t" style="left:2984.7px;top:706px;line-height:32px;font-size:26.4px;color:#181d27;-webkit-text-stroke:0.58px #181d27;letter-spacing:0.87px;">16.49 KB</span>
<div style="left:3680.6px;top:640.8px;width:284.8px;height:125.8px;background:#fff;border:2px solid #eef0f7;border-radius:13px"></div>
<span class="t" style="left:3705px;top:669px;line-height:24px;font-size:20.2px;color:#6c717c;-webkit-text-stroke:0.18px #6c717c;letter-spacing:0.27px;">Created Date</span>
<span class="t" style="left:3705px;top:706px;line-height:32px;font-size:26.4px;color:#181d27;-webkit-text-stroke:0.58px #181d27;letter-spacing:1.28px;">24 Jul 2023</span>
<div style="left:800.6px;top:789.1px;width:3164.6px;height:998.3px;background:#fff;border:2px solid #eef0f7;border-radius:14px"></div>
<div style="left:824.2px;top:813px;width:1559.4px;height:57.6px;background:#fafafa;border:2px solid #e7e8ec;border-radius:12px"></div>
<svg class="i" style="left:840.1px;top:829.1px;" width="27.8" height="27.8" viewBox="0 0 27.8 27.8"><g fill="none" stroke="#252b37" stroke-width="1.7" stroke-linecap="round"><circle cx="12.9" cy="12.9" r="9.05"/><path d="M20.23 20.23L23.3 23.3"/></g></svg>
<span class="t" style="left:876.3px;top:830px;line-height:24px;font-size:20.4px;color:#a8abb2;-webkit-text-stroke:0.18px #a8abb2;letter-spacing:0.21px;">Find in table</span>
<div style="left:802.6px;top:893.7px;width:3160.6px;height:56px;background:#fafafb;border-bottom:2px solid #eceef1"></div>
<span class="t" style="left:825.4px;top:909px;line-height:24px;font-size:20.2px;color:#4a4f5b;-webkit-text-stroke:0.44px #4a4f5b;letter-spacing:0.44px;">Name</span>
<svg class="i" style="left:1355px;top:912.4px;" width="11.6" height="18" viewBox="0 0 11.6 18"><path d="M5.8 0.8L10.4 6.6H1.2Z" fill="#c2c5cc"/><path d="M5.8 17.2L10.4 11.4H1.2Z" fill="#c2c5cc"/></svg>
<span class="t" style="left:1390.6px;top:909px;line-height:24px;font-size:20.2px;color:#4a4f5b;-webkit-text-stroke:0.44px #4a4f5b;letter-spacing:0.61px;">Data Type</span>
<svg class="i" style="left:1700.6px;top:912.4px;" width="11.6" height="18" viewBox="0 0 11.6 18"><path d="M5.8 0.8L10.4 6.6H1.2Z" fill="#c2c5cc"/><path d="M5.8 17.2L10.4 11.4H1.2Z" fill="#c2c5cc"/></svg>
<span class="t" style="left:1737.7px;top:909px;line-height:24px;font-size:20.2px;color:#4a4f5b;-webkit-text-stroke:0.44px #4a4f5b;letter-spacing:0.18px;">Null %</span>
<svg class="i" style="left:2162.4px;top:912.4px;" width="11.6" height="18" viewBox="0 0 11.6 18"><path d="M5.8 0.8L10.4 6.6H1.2Z" fill="#c2c5cc"/><path d="M5.8 17.2L10.4 11.4H1.2Z" fill="#c2c5cc"/></svg>
<span class="t" style="left:2198.8px;top:909px;line-height:24px;font-size:20.2px;color:#4a4f5b;-webkit-text-stroke:0.44px #4a4f5b;letter-spacing:0.52px;">Unique %</span>
<svg class="i" style="left:2624px;top:912.4px;" width="11.6" height="18" viewBox="0 0 11.6 18"><path d="M5.8 0.8L10.4 6.6H1.2Z" fill="#c2c5cc"/><path d="M5.8 17.2L10.4 11.4H1.2Z" fill="#c2c5cc"/></svg>
<span class="t" style="left:2660.3px;top:909px;line-height:24px;font-size:20.2px;color:#4a4f5b;-webkit-text-stroke:0.44px #4a4f5b;letter-spacing:0.66px;">Distinct %</span>
<svg class="i" style="left:3085.4px;top:912.4px;" width="11.6" height="18" viewBox="0 0 11.6 18"><path d="M5.8 0.8L10.4 6.6H1.2Z" fill="#c2c5cc"/><path d="M5.8 17.2L10.4 11.4H1.2Z" fill="#c2c5cc"/></svg>
<span class="t" style="left:3122px;top:909px;line-height:24px;font-size:20.2px;color:#4a4f5b;-webkit-text-stroke:0.44px #4a4f5b;letter-spacing:0.49px;">Value Count</span>
<svg class="i" style="left:3362.8px;top:912.4px;" width="11.6" height="18" viewBox="0 0 11.6 18"><path d="M5.8 0.8L10.4 6.6H1.2Z" fill="#c2c5cc"/><path d="M5.8 17.2L10.4 11.4H1.2Z" fill="#c2c5cc"/></svg>
<span class="t" style="left:3399px;top:909px;line-height:24px;font-size:20.2px;color:#4a4f5b;-webkit-text-stroke:0.44px #4a4f5b;letter-spacing:0.71px;">Tests</span>
<span class="t" style="left:3629.6px;top:909px;line-height:24px;font-size:20.2px;color:#4a4f5b;-webkit-text-stroke:0.44px #4a4f5b;letter-spacing:0.43px;">Status</span>
<span class="t" style="left:826.4px;top:971px;line-height:24px;font-size:20.4px;color:#2462dd;-webkit-text-stroke:0.18px #2462dd;letter-spacing:0.19px;">address_id</span>
<span class="t" style="left:1390.8px;top:964px;line-height:24px;font-size:20.4px;color:#252b37;-webkit-text-stroke:0.18px #252b37;letter-spacing:0.49px;">numeric</span>
<span class="t" style="left:1737.2px;top:964px;line-height:24px;font-size:20.4px;color:#252b37;-webkit-text-stroke:0.18px #252b37;letter-spacing:0.74px;">0%</span>
<div style="left:1846.6px;top:973.9px;width:292.4px;height:9.4px;background:#f4f4f5;border-radius:5px;overflow:hidden"></div>
<span class="t" style="left:2198.6px;top:964px;line-height:24px;font-size:20.4px;color:#252b37;-webkit-text-stroke:0.18px #252b37;letter-spacing:1.09px;">100%</span>
<div style="left:2308.2px;top:973.9px;width:292.4px;height:9.4px;background:#f4f4f5;border-radius:5px;overflow:hidden"><div style="left:0;top:0;height:9.4px;width:292.4px;background:#6f48e8;border-radius:5px"></div></div>
<span class="t" style="left:2660.2px;top:964px;line-height:24px;font-size:20.4px;color:#252b37;-webkit-text-stroke:0.18px #252b37;letter-spacing:1.09px;">100%</span>
<div style="left:2769.8px;top:973.9px;width:292.4px;height:9.4px;background:#f4f4f5;border-radius:5px;overflow:hidden"><div style="left:0;top:0;height:9.4px;width:292.4px;background:#4e8b9c;border-radius:5px"></div></div>
<span class="t" style="left:3122px;top:964px;line-height:24px;font-size:20.4px;color:#252b37;-webkit-text-stroke:0.18px #252b37;letter-spacing:1.14px;">14,567</span>
<span class="t" style="left:3399px;top:964px;line-height:24px;font-size:20.4px;color:#2462dd;-webkit-text-stroke:0.18px #2462dd;">0</span>
<span class="t" style="left:3632px;top:960px;line-height:29px;font-size:24px;color:#252b37;-webkit-text-stroke:0.22px #252b37;letter-spacing:5.22px;">--</span>
<div style="left:802.6px;top:1018px;width:3160.6px;height:2px;background:#f3f4f7"></div>
<span class="t" style="left:826.4px;top:1041px;line-height:24px;font-size:20.4px;color:#2462dd;-webkit-text-stroke:0.18px #2462dd;letter-spacing:0.22px;">shop_id</span>
<span class="t" style="left:1390.8px;top:1034px;line-height:24px;font-size:20.4px;color:#252b37;-webkit-text-stroke:0.18px #252b37;letter-spacing:0.49px;">numeric</span>
<span class="t" style="left:1737.2px;top:1034px;line-height:24px;font-size:20.4px;color:#252b37;-webkit-text-stroke:0.18px #252b37;letter-spacing:0.74px;">0%</span>
<div style="left:1846.6px;top:1043.73px;width:292.4px;height:9.4px;background:#f4f4f5;border-radius:5px;overflow:hidden"></div>
<span class="t" style="left:2198.6px;top:1034px;line-height:24px;font-size:20.4px;color:#252b37;-webkit-text-stroke:0.18px #252b37;letter-spacing:1.09px;">100%</span>
<div style="left:2308.2px;top:1043.73px;width:292.4px;height:9.4px;background:#f4f4f5;border-radius:5px;overflow:hidden"><div style="left:0;top:0;height:9.4px;width:292.4px;background:#6f48e8;border-radius:5px"></div></div>
<span class="t" style="left:2660.2px;top:1034px;line-height:24px;font-size:20.4px;color:#252b37;-webkit-text-stroke:0.18px #252b37;letter-spacing:1.09px;">100%</span>
<div style="left:2769.8px;top:1043.73px;width:292.4px;height:9.4px;background:#f4f4f5;border-radius:5px;overflow:hidden"><div style="left:0;top:0;height:9.4px;width:292.4px;background:#4e8b9c;border-radius:5px"></div></div>
<span class="t" style="left:3122px;top:1034px;line-height:24px;font-size:20.4px;color:#252b37;-webkit-text-stroke:0.18px #252b37;letter-spacing:1.14px;">14,567</span>
<span class="t" style="left:3399px;top:1034px;line-height:24px;font-size:20.4px;color:#2462dd;-webkit-text-stroke:0.18px #2462dd;">0</span>
<span class="t" style="left:3632px;top:1030px;line-height:29px;font-size:24px;color:#252b37;-webkit-text-stroke:0.22px #252b37;letter-spacing:5.22px;">--</span>
<div style="left:802.6px;top:1087px;width:3160.6px;height:2px;background:#f3f4f7"></div>
<span class="t" style="left:826.4px;top:1111px;line-height:24px;font-size:20.4px;color:#2462dd;-webkit-text-stroke:0.18px #2462dd;letter-spacing:0.32px;">first_name</span>
<span class="t" style="left:1390.8px;top:1104px;line-height:24px;font-size:20.4px;color:#252b37;-webkit-text-stroke:0.18px #252b37;letter-spacing:0.34px;">varchar</span>
<span class="t" style="left:1737.2px;top:1104px;line-height:24px;font-size:20.4px;color:#252b37;-webkit-text-stroke:0.18px #252b37;letter-spacing:0.74px;">0%</span>
<div style="left:1846.6px;top:1113.56px;width:292.4px;height:9.4px;background:#f4f4f5;border-radius:5px;overflow:hidden"></div>
<span class="t" style="left:2198.6px;top:1104px;line-height:24px;font-size:20.4px;color:#252b37;-webkit-text-stroke:0.18px #252b37;letter-spacing:0.74px;">0%</span>
<div style="left:2308.2px;top:1113.56px;width:292.4px;height:9.4px;background:#f4f4f5;border-radius:5px;overflow:hidden"></div>
<span class="t" style="left:2660.2px;top:1104px;line-height:24px;font-size:20.4px;color:#252b37;-webkit-text-stroke:0.18px #252b37;letter-spacing:0.74px;">5%</span>
<div style="left:2769.8px;top:1113.56px;width:292.4px;height:9.4px;background:#f4f4f5;border-radius:5px;overflow:hidden"><div style="left:0;top:0;height:9.4px;width:14.62px;background:#4e8b9c;border-radius:5px"></div></div>
<span class="t" style="left:3122px;top:1104px;line-height:24px;font-size:20.4px;color:#252b37;-webkit-text-stroke:0.18px #252b37;letter-spacing:1.14px;">14,509</span>
<span class="t" style="left:3399px;top:1104px;line-height:24px;font-size:20.4px;color:#2462dd;-webkit-text-stroke:0.18px #2462dd;">0</span>
<span class="t" style="left:3632px;top:1100px;line-height:29px;font-size:24px;color:#252b37;-webkit-text-stroke:0.22px #252b37;letter-spacing:5.22px;">--</span>
<div style="left:802.6px;top:1157px;width:3160.6px;height:2px;background:#f3f4f7"></div>
<span class="t" style="left:826.4px;top:1181px;line-height:24px;font-size:20.4px;color:#2462dd;-webkit-text-stroke:0.18px #2462dd;letter-spacing:-0.02px;">last_name</span>
<span class="t" style="left:1390.8px;top:1173px;line-height:24px;font-size:20.4px;color:#252b37;-webkit-text-stroke:0.18px #252b37;letter-spacing:0.34px;">varchar</span>
<span class="t" style="left:1737.2px;top:1173px;line-height:24px;font-size:20.4px;color:#252b37;-webkit-text-stroke:0.18px #252b37;letter-spacing:0.74px;">1%</span>
<div style="left:1846.6px;top:1183.39px;width:292.4px;height:9.4px;background:#f4f4f5;border-radius:5px;overflow:hidden"><div style="left:0;top:0;height:9.4px;width:2.92px;background:#311b92;border-radius:5px"></div></div>
<span class="t" style="left:2198.6px;top:1173px;line-height:24px;font-size:20.4px;color:#252b37;-webkit-text-stroke:0.18px #252b37;letter-spacing:1.01px;">80%</span>
<div style="left:2308.2px;top:1183.39px;width:292.4px;height:9.4px;background:#f4f4f5;border-radius:5px;overflow:hidden"><div style="left:0;top:0;height:9.4px;width:233.92px;background:#6f48e8;border-radius:5px"></div></div>
<span class="t" style="left:2660.2px;top:1173px;line-height:24px;font-size:20.4px;color:#252b37;-webkit-text-stroke:0.18px #252b37;letter-spacing:0.74px;">5%</span>
<div style="left:2769.8px;top:1183.39px;width:292.4px;height:9.4px;background:#f4f4f5;border-radius:5px;overflow:hidden"><div style="left:0;top:0;height:9.4px;width:14.62px;background:#4e8b9c;border-radius:5px"></div></div>
<span class="t" style="left:3122px;top:1173px;line-height:24px;font-size:20.4px;color:#252b37;-webkit-text-stroke:0.18px #252b37;letter-spacing:1.14px;">14,509</span>
<span class="t" style="left:3399px;top:1173px;line-height:24px;font-size:20.4px;color:#2462dd;-webkit-text-stroke:0.18px #2462dd;">1</span>
<div style="left:3629.1px;top:1171.19px;width:34.4px;height:34.4px;background:#f6fef9;border:2px solid #bdeed7;border-radius:50%"></div>
<span class="t" style="left:3641.4px;top:1177px;line-height:22px;font-size:17.6px;color:#717680;-webkit-text-stroke:0.16px #717680;">1</span>
<div style="left:3686px;top:1171.19px;width:34.4px;height:34.4px;background:#fef5f4;border:2px solid #fccbc0;border-radius:50%"></div>
<span class="t" style="left:3698.3px;top:1177px;line-height:22px;font-size:17.6px;color:#717680;-webkit-text-stroke:0.16px #717680;">0</span>
<div style="left:3742.9px;top:1171.19px;width:34.4px;height:34.4px;background:#fffbf2;border:2px solid #fee4a6;border-radius:50%"></div>
<span class="t" style="left:3755.2px;top:1177px;line-height:22px;font-size:17.6px;color:#717680;-webkit-text-stroke:0.16px #717680;">0</span>
<div style="left:802.6px;top:1227px;width:3160.6px;height:2px;background:#f3f4f7"></div>
<span class="t" style="left:826.4px;top:1251px;line-height:24px;font-size:20.4px;color:#2462dd;-webkit-text-stroke:0.18px #2462dd;letter-spacing:-0.05px;">address1</span>
<span class="t" style="left:1390.8px;top:1243px;line-height:24px;font-size:20.4px;color:#252b37;-webkit-text-stroke:0.18px #252b37;letter-spacing:0.34px;">varchar</span>
<span class="t" style="left:1737.2px;top:1243px;line-height:24px;font-size:20.4px;color:#252b37;-webkit-text-stroke:0.18px #252b37;letter-spacing:0.74px;">1%</span>
<div style="left:1846.6px;top:1253.22px;width:292.4px;height:9.4px;background:#f4f4f5;border-radius:5px;overflow:hidden"><div style="left:0;top:0;height:9.4px;width:2.92px;background:#311b92;border-radius:5px"></div></div>
<span class="t" style="left:2198.6px;top:1243px;line-height:24px;font-size:20.4px;color:#252b37;-webkit-text-stroke:0.18px #252b37;letter-spacing:1.01px;">80%</span>
<div style="left:2308.2px;top:1253.22px;width:292.4px;height:9.4px;background:#f4f4f5;border-radius:5px;overflow:hidden"><div style="left:0;top:0;height:9.4px;width:233.92px;background:#6f48e8;border-radius:5px"></div></div>
<span class="t" style="left:2660.2px;top:1243px;line-height:24px;font-size:20.4px;color:#252b37;-webkit-text-stroke:0.18px #252b37;letter-spacing:0.74px;">5%</span>
<div style="left:2769.8px;top:1253.22px;width:292.4px;height:9.4px;background:#f4f4f5;border-radius:5px;overflow:hidden"><div style="left:0;top:0;height:9.4px;width:14.62px;background:#4e8b9c;border-radius:5px"></div></div>
<span class="t" style="left:3122px;top:1243px;line-height:24px;font-size:20.4px;color:#252b37;-webkit-text-stroke:0.18px #252b37;letter-spacing:1.14px;">14,509</span>
<span class="t" style="left:3399px;top:1243px;line-height:24px;font-size:20.4px;color:#2462dd;-webkit-text-stroke:0.18px #2462dd;">0</span>
<span class="t" style="left:3632px;top:1240px;line-height:29px;font-size:24px;color:#252b37;-webkit-text-stroke:0.22px #252b37;letter-spacing:5.22px;">--</span>
<div style="left:802.6px;top:1297px;width:3160.6px;height:2px;background:#f3f4f7"></div>
<span class="t" style="left:826.4px;top:1321px;line-height:24px;font-size:20.4px;color:#2462dd;-webkit-text-stroke:0.18px #2462dd;letter-spacing:0.42px;">address2</span>
<span class="t" style="left:1390.8px;top:1313px;line-height:24px;font-size:20.4px;color:#252b37;-webkit-text-stroke:0.18px #252b37;letter-spacing:0.34px;">varchar</span>
<span class="t" style="left:1737.2px;top:1313px;line-height:24px;font-size:20.4px;color:#252b37;-webkit-text-stroke:0.18px #252b37;letter-spacing:1.09px;">100%</span>
<div style="left:1846.6px;top:1323.05px;width:292.4px;height:9.4px;background:#f4f4f5;border-radius:5px;overflow:hidden"><div style="left:0;top:0;height:9.4px;width:292.4px;background:#311b92;border-radius:5px"></div></div>
<span class="t" style="left:2198.6px;top:1313px;line-height:24px;font-size:20.4px;color:#252b37;-webkit-text-stroke:0.18px #252b37;letter-spacing:1.09px;">100%</span>
<div style="left:2308.2px;top:1323.05px;width:292.4px;height:9.4px;background:#f4f4f5;border-radius:5px;overflow:hidden"><div style="left:0;top:0;height:9.4px;width:292.4px;background:#6f48e8;border-radius:5px"></div></div>
<span class="t" style="left:2660.2px;top:1313px;line-height:24px;font-size:20.4px;color:#252b37;-webkit-text-stroke:0.18px #252b37;letter-spacing:1.01px;">10%</span>
<div style="left:2769.8px;top:1323.05px;width:292.4px;height:9.4px;background:#f4f4f5;border-radius:5px;overflow:hidden"><div style="left:0;top:0;height:9.4px;width:29.24px;background:#4e8b9c;border-radius:5px"></div></div>
<span class="t" style="left:3122px;top:1313px;line-height:24px;font-size:20.4px;color:#252b37;-webkit-text-stroke:0.18px #252b37;letter-spacing:1.96px;">10</span>
<span class="t" style="left:3399px;top:1313px;line-height:24px;font-size:20.4px;color:#2462dd;-webkit-text-stroke:0.18px #2462dd;">0</span>
<span class="t" style="left:3632px;top:1309px;line-height:29px;font-size:24px;color:#252b37;-webkit-text-stroke:0.22px #252b37;letter-spacing:5.22px;">--</span>
<div style="left:802.6px;top:1367px;width:3160.6px;height:2px;background:#f3f4f7"></div>
<span class="t" style="left:826.4px;top:1390px;line-height:24px;font-size:20.4px;color:#2462dd;-webkit-text-stroke:0.18px #2462dd;letter-spacing:0.6px;">company</span>
<span class="t" style="left:1390.8px;top:1383px;line-height:24px;font-size:20.4px;color:#252b37;-webkit-text-stroke:0.18px #252b37;letter-spacing:0.34px;">varchar</span>
<span class="t" style="left:1737.2px;top:1383px;line-height:24px;font-size:20.4px;color:#252b37;-webkit-text-stroke:0.18px #252b37;letter-spacing:1.01px;">99%</span>
<div style="left:1846.6px;top:1392.88px;width:292.4px;height:9.4px;background:#f4f4f5;border-radius:5px;overflow:hidden"><div style="left:0;top:0;height:9.4px;width:289.48px;background:#311b92;border-radius:5px"></div></div>
<span class="t" style="left:2198.6px;top:1383px;line-height:24px;font-size:20.4px;color:#252b37;-webkit-text-stroke:0.18px #252b37;letter-spacing:1.09px;">100%</span>
<div style="left:2308.2px;top:1392.88px;width:292.4px;height:9.4px;background:#f4f4f5;border-radius:5px;overflow:hidden"><div style="left:0;top:0;height:9.4px;width:292.4px;background:#6f48e8;border-radius:5px"></div></div>
<span class="t" style="left:2660.2px;top:1383px;line-height:24px;font-size:20.4px;color:#252b37;-webkit-text-stroke:0.18px #252b37;letter-spacing:1.01px;">10%</span>
<div style="left:2769.8px;top:1392.88px;width:292.4px;height:9.4px;background:#f4f4f5;border-radius:5px;overflow:hidden"><div style="left:0;top:0;height:9.4px;width:29.24px;background:#4e8b9c;border-radius:5px"></div></div>
<span class="t" style="left:3122px;top:1383px;line-height:24px;font-size:20.4px;color:#252b37;-webkit-text-stroke:0.18px #252b37;letter-spacing:1.62px;">560</span>
<span class="t" style="left:3399px;top:1383px;line-height:24px;font-size:20.4px;color:#2462dd;-webkit-text-stroke:0.18px #2462dd;">0</span>
<span class="t" style="left:3632px;top:1379px;line-height:29px;font-size:24px;color:#252b37;-webkit-text-stroke:0.22px #252b37;letter-spacing:5.22px;">--</span>
<div style="left:802.6px;top:1437px;width:3160.6px;height:2px;background:#f3f4f7"></div>
<span class="t" style="left:826.4px;top:1460px;line-height:24px;font-size:20.4px;color:#2462dd;-webkit-text-stroke:0.18px #2462dd;letter-spacing:0.93px;">city</span>
<span class="t" style="left:1390.8px;top:1453px;line-height:24px;font-size:20.4px;color:#252b37;-webkit-text-stroke:0.18px #252b37;letter-spacing:0.34px;">varchar</span>
<span class="t" style="left:1737.2px;top:1453px;line-height:24px;font-size:20.4px;color:#252b37;-webkit-text-stroke:0.18px #252b37;letter-spacing:1.01px;">90%</span>
<div style="left:1846.6px;top:1462.71px;width:292.4px;height:9.4px;background:#f4f4f5;border-radius:5px;overflow:hidden"><div style="left:0;top:0;height:9.4px;width:263.16px;background:#311b92;border-radius:5px"></div></div>
<span class="t" style="left:2198.6px;top:1453px;line-height:24px;font-size:20.4px;color:#252b37;-webkit-text-stroke:0.18px #252b37;letter-spacing:1.01px;">61%</span>
<div style="left:2308.2px;top:1462.71px;width:292.4px;height:9.4px;background:#f4f4f5;border-radius:5px;overflow:hidden"><div style="left:0;top:0;height:9.4px;width:178.36px;background:#6f48e8;border-radius:5px"></div></div>
<span class="t" style="left:2660.2px;top:1453px;line-height:24px;font-size:20.4px;color:#252b37;-webkit-text-stroke:0.18px #252b37;letter-spacing:1.01px;">10%</span>
<div style="left:2769.8px;top:1462.71px;width:292.4px;height:9.4px;background:#f4f4f5;border-radius:5px;overflow:hidden"><div style="left:0;top:0;height:9.4px;width:29.24px;background:#4e8b9c;border-radius:5px"></div></div>
<span class="t" style="left:3122px;top:1453px;line-height:24px;font-size:20.4px;color:#252b37;-webkit-text-stroke:0.18px #252b37;letter-spacing:1.14px;">12,567</span>
<span class="t" style="left:3399px;top:1453px;line-height:24px;font-size:20.4px;color:#2462dd;-webkit-text-stroke:0.18px #2462dd;">0</span>
<span class="t" style="left:3632px;top:1449px;line-height:29px;font-size:24px;color:#252b37;-webkit-text-stroke:0.22px #252b37;letter-spacing:5.22px;">--</span>
<div style="left:802.6px;top:1506px;width:3160.6px;height:2px;background:#f3f4f7"></div>
<span class="t" style="left:826.4px;top:1530px;line-height:24px;font-size:20.4px;color:#2462dd;-webkit-text-stroke:0.18px #2462dd;letter-spacing:0.46px;">region</span>
<span class="t" style="left:1390.8px;top:1523px;line-height:24px;font-size:20.4px;color:#252b37;-webkit-text-stroke:0.18px #252b37;letter-spacing:0.34px;">varchar</span>
<span class="t" style="left:1737.2px;top:1523px;line-height:24px;font-size:20.4px;color:#252b37;-webkit-text-stroke:0.18px #252b37;letter-spacing:1.01px;">90%</span>
<div style="left:1846.6px;top:1532.54px;width:292.4px;height:9.4px;background:#f4f4f5;border-radius:5px;overflow:hidden"><div style="left:0;top:0;height:9.4px;width:263.16px;background:#311b92;border-radius:5px"></div></div>
<span class="t" style="left:2198.6px;top:1523px;line-height:24px;font-size:20.4px;color:#252b37;-webkit-text-stroke:0.18px #252b37;letter-spacing:1.01px;">61%</span>
<div style="left:2308.2px;top:1532.54px;width:292.4px;height:9.4px;background:#f4f4f5;border-radius:5px;overflow:hidden"><div style="left:0;top:0;height:9.4px;width:178.36px;background:#6f48e8;border-radius:5px"></div></div>
<span class="t" style="left:2660.2px;top:1523px;line-height:24px;font-size:20.4px;color:#252b37;-webkit-text-stroke:0.18px #252b37;letter-spacing:1.01px;">10%</span>
<div style="left:2769.8px;top:1532.54px;width:292.4px;height:9.4px;background:#f4f4f5;border-radius:5px;overflow:hidden"><div style="left:0;top:0;height:9.4px;width:29.24px;background:#4e8b9c;border-radius:5px"></div></div>
<span class="t" style="left:3122px;top:1523px;line-height:24px;font-size:20.4px;color:#252b37;-webkit-text-stroke:0.18px #252b37;letter-spacing:1.14px;">12,567</span>
<span class="t" style="left:3399px;top:1523px;line-height:24px;font-size:20.4px;color:#2462dd;-webkit-text-stroke:0.18px #2462dd;">0</span>
<span class="t" style="left:3632px;top:1519px;line-height:29px;font-size:24px;color:#252b37;-webkit-text-stroke:0.22px #252b37;letter-spacing:5.22px;">--</span>
<div style="left:802.6px;top:1576px;width:3160.6px;height:2px;background:#f3f4f7"></div>
<span class="t" style="left:826.4px;top:1600px;line-height:24px;font-size:20.4px;color:#2462dd;-webkit-text-stroke:0.18px #2462dd;letter-spacing:0.76px;">zip</span>
<span class="t" style="left:1390.8px;top:1592px;line-height:24px;font-size:20.4px;color:#252b37;-webkit-text-stroke:0.18px #252b37;letter-spacing:0.34px;">varchar</span>
<span class="t" style="left:1737.2px;top:1592px;line-height:24px;font-size:20.4px;color:#252b37;-webkit-text-stroke:0.18px #252b37;letter-spacing:1.01px;">90%</span>
<div style="left:1846.6px;top:1602.37px;width:292.4px;height:9.4px;background:#f4f4f5;border-radius:5px;overflow:hidden"><div style="left:0;top:0;height:9.4px;width:263.16px;background:#311b92;border-radius:5px"></div></div>
<span class="t" style="left:2198.6px;top:1592px;line-height:24px;font-size:20.4px;color:#252b37;-webkit-text-stroke:0.18px #252b37;letter-spacing:1.01px;">61%</span>
<div style="left:2308.2px;top:1602.37px;width:292.4px;height:9.4px;background:#f4f4f5;border-radius:5px;overflow:hidden"><div style="left:0;top:0;height:9.4px;width:178.36px;background:#6f48e8;border-radius:5px"></div></div>
<span class="t" style="left:2660.2px;top:1592px;line-height:24px;font-size:20.4px;color:#252b37;-webkit-text-stroke:0.18px #252b37;letter-spacing:1.01px;">10%</span>
<div style="left:2769.8px;top:1602.37px;width:292.4px;height:9.4px;background:#f4f4f5;border-radius:5px;overflow:hidden"><div style="left:0;top:0;height:9.4px;width:29.24px;background:#4e8b9c;border-radius:5px"></div></div>
<span class="t" style="left:3122px;top:1592px;line-height:24px;font-size:20.4px;color:#252b37;-webkit-text-stroke:0.18px #252b37;letter-spacing:1.14px;">12,567</span>
<span class="t" style="left:3399px;top:1592px;line-height:24px;font-size:20.4px;color:#2462dd;-webkit-text-stroke:0.18px #2462dd;">0</span>
<span class="t" style="left:3632px;top:1589px;line-height:29px;font-size:24px;color:#252b37;-webkit-text-stroke:0.22px #252b37;letter-spacing:5.22px;">--</span>
<div style="left:802.6px;top:1646px;width:3160.6px;height:2px;background:#f3f4f7"></div>
<span class="t" style="left:826.4px;top:1670px;line-height:24px;font-size:20.4px;color:#2462dd;-webkit-text-stroke:0.18px #2462dd;letter-spacing:0.82px;">country</span>
<span class="t" style="left:1390.8px;top:1662px;line-height:24px;font-size:20.4px;color:#252b37;-webkit-text-stroke:0.18px #252b37;letter-spacing:0.34px;">varchar</span>
<span class="t" style="left:1737.2px;top:1662px;line-height:24px;font-size:20.4px;color:#252b37;-webkit-text-stroke:0.18px #252b37;letter-spacing:1.01px;">90%</span>
<div style="left:1846.6px;top:1672.2px;width:292.4px;height:9.4px;background:#f4f4f5;border-radius:5px;overflow:hidden"><div style="left:0;top:0;height:9.4px;width:263.16px;background:#311b92;border-radius:5px"></div></div>
<span class="t" style="left:2198.6px;top:1662px;line-height:24px;font-size:20.4px;color:#252b37;-webkit-text-stroke:0.18px #252b37;letter-spacing:1.01px;">61%</span>
<div style="left:2308.2px;top:1672.2px;width:292.4px;height:9.4px;background:#f4f4f5;border-radius:5px;overflow:hidden"><div style="left:0;top:0;height:9.4px;width:178.36px;background:#6f48e8;border-radius:5px"></div></div>
<span class="t" style="left:2660.2px;top:1662px;line-height:24px;font-size:20.4px;color:#252b37;-webkit-text-stroke:0.18px #252b37;letter-spacing:1.01px;">10%</span>
<div style="left:2769.8px;top:1672.2px;width:292.4px;height:9.4px;background:#f4f4f5;border-radius:5px;overflow:hidden"><div style="left:0;top:0;height:9.4px;width:29.24px;background:#4e8b9c;border-radius:5px"></div></div>
<span class="t" style="left:3122px;top:1662px;line-height:24px;font-size:20.4px;color:#252b37;-webkit-text-stroke:0.18px #252b37;letter-spacing:1.14px;">12,567</span>
<span class="t" style="left:3399px;top:1662px;line-height:24px;font-size:20.4px;color:#2462dd;-webkit-text-stroke:0.18px #2462dd;">0</span>
<span class="t" style="left:3632px;top:1659px;line-height:29px;font-size:24px;color:#252b37;-webkit-text-stroke:0.22px #252b37;letter-spacing:5.22px;">--</span>
<div style="left:802.6px;top:1716px;width:3160.6px;height:2px;background:#f3f4f7"></div>
<span class="t" style="left:826.4px;top:1740px;line-height:24px;font-size:20.4px;color:#2462dd;-webkit-text-stroke:0.18px #2462dd;letter-spacing:0.57px;">phone</span>
<span class="t" style="left:1390.8px;top:1732px;line-height:24px;font-size:20.4px;color:#252b37;-webkit-text-stroke:0.18px #252b37;letter-spacing:0.34px;">varchar</span>
<span class="t" style="left:1737.2px;top:1732px;line-height:24px;font-size:20.4px;color:#252b37;-webkit-text-stroke:0.18px #252b37;letter-spacing:0.74px;">0%</span>
<div style="left:1846.6px;top:1742.03px;width:292.4px;height:9.4px;background:#f4f4f5;border-radius:5px;overflow:hidden"></div>
<span class="t" style="left:2198.6px;top:1732px;line-height:24px;font-size:20.4px;color:#252b37;-webkit-text-stroke:0.18px #252b37;letter-spacing:1.09px;">100%</span>
<div style="left:2308.2px;top:1742.03px;width:292.4px;height:9.4px;background:#f4f4f5;border-radius:5px;overflow:hidden"><div style="left:0;top:0;height:9.4px;width:292.4px;background:#6f48e8;border-radius:5px"></div></div>
<span class="t" style="left:2660.2px;top:1732px;line-height:24px;font-size:20.4px;color:#252b37;-webkit-text-stroke:0.18px #252b37;letter-spacing:1.09px;">100%</span>
<div style="left:2769.8px;top:1742.03px;width:292.4px;height:9.4px;background:#f4f4f5;border-radius:5px;overflow:hidden"><div style="left:0;top:0;height:9.4px;width:292.4px;background:#4e8b9c;border-radius:5px"></div></div>
<span class="t" style="left:3122px;top:1732px;line-height:24px;font-size:20.4px;color:#252b37;-webkit-text-stroke:0.18px #252b37;letter-spacing:1.14px;">14,509</span>
<span class="t" style="left:3399px;top:1732px;line-height:24px;font-size:20.4px;color:#2462dd;-webkit-text-stroke:0.18px #2462dd;">0</span>
<span class="t" style="left:3632px;top:1728px;line-height:29px;font-size:24px;color:#252b37;-webkit-text-stroke:0.22px #252b37;letter-spacing:5.22px;">--</span>
<div style="left:4001.3px;top:1688.9px;width:40px;height:68px;background:#fff;border-radius:9px;box-shadow:-1px 3px 9px rgba(16,24,64,0.20)"></div>
<svg class="i" style="left:4004px;top:1706px;" width="20" height="34" viewBox="0 0 20 34"><g fill="none" stroke="#55565c" stroke-width="2.7"><path d="M5 28.6V21.4L20.4 13.2"/><path d="M19.8 4V12.4"/><path d="M5 8.2V17.4M19.8 17V29" stroke="#8a8b90" stroke-dasharray="2.6 2.2"/></g></svg>
<div style="left:124px;top:1811px;width:3879px;height:100px;background:linear-gradient(to bottom,rgba(20,20,30,0) 0%,rgba(20,20,30,0.008) 35%,rgba(20,20,30,0.028) 70%,rgba(20,20,30,0.062) 100%)"></div>
<svg class="i" style="left:3918px;top:1823.2px;" width="84" height="84" viewBox="0 0 84 84"><defs><radialGradient id="cg"><stop offset="0.78" stop-color="#bcd6ff" stop-opacity="0.9"/><stop offset="1" stop-color="#bcd6ff" stop-opacity="0"/></radialGradient></defs><circle cx="42" cy="42" r="42" fill="url(#cg)"/><circle cx="42" cy="42" r="35" fill="#fff"/><circle cx="42" cy="42" r="31.6" fill="#0b50c4"/><path d="M42 24.4V32" stroke="#fff" stroke-width="1.8"/><circle cx="42" cy="24.2" r="2" fill="#fff"/><rect x="22" y="31.6" width="40" height="26.4" rx="9" fill="#fff"/><path d="M41 57L45.6 62.4L46.6 57Z" fill="#fff"/><rect x="28" y="37.6" width="28" height="14.6" rx="5" fill="#cfe3ff"/><circle cx="35.4" cy="45" r="2" fill="#0b50c4"/><circle cx="48.6" cy="45" r="2" fill="#0b50c4"/></svg>
</div>
</body></html>
